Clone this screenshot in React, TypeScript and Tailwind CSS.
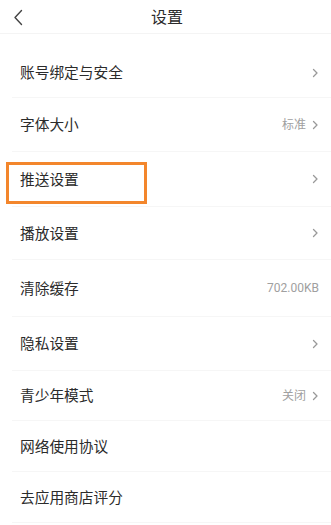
const rows = [
  { label: "账号绑定与安全", h: "h-[50px]", arrow: true },
  { label: "字体大小", h: "h-[54px]", value: "标准", arrow: true },
  { label: "推送设置", h: "h-[55px]", arrow: true, marked: true },
  { label: "播放设置", h: "h-[53px]", arrow: true },
  { label: "清除缓存", h: "h-[57px]", value: "702.00KB" },
  { label: "隐私设置", h: "h-[54px]", arrow: true },
  { label: "青少年模式", h: "h-[50px]", value: "关闭", arrow: true },
  { label: "网络使用协议", h: "h-[51px]" },
  { label: "去应用商店评分", h: "h-[51px]" },
];

function ChevronRight() {
  return (
    <svg width="8" height="10" viewBox="0 0 8 10" className="ml-[5px]">
      <path d="M2.5 1.5 L6 5 L2.5 8.5" fill="none" stroke="#999" strokeWidth="1.3" strokeLinecap="round" strokeLinejoin="round" />
    </svg>
  );
}

export default function App() {
  return (
    <main className="w-[331px] h-[525px] overflow-hidden bg-white font-['Noto_Sans_CJK_SC',sans-serif] text-[#2b2b2b]">
      {/* Header */}
      <header className="relative h-[34px] flex items-center justify-center border-b border-[#f4f4f4]">
        <button className="absolute left-[12px] top-[9px]">
          <svg width="12" height="17" viewBox="0 0 12 17">
            <path d="M9.5 1.5 L3 8.5 L9.5 15.5" fill="none" stroke="#444" strokeWidth="1.4" strokeLinecap="round" strokeLinejoin="round" />
          </svg>
        </button>
        <h1 className="text-[16px] leading-none -mt-[2px] ml-[3px]">设置</h1>
      </header>

      <div className="h-[14px]" />

      {/* List */}
      <ul className="pl-[12px]">
        {rows.map((row) => (
          <li
            key={row.label}
            className={`relative ${row.h} flex items-center justify-between pl-[8px] pr-[12px] border-b border-[#f6f6f6]`}
          >
            <span className="text-[14.7px] leading-none">{row.label}</span>
            <span className="flex items-center">
              {row.value && (
                <span className="text-[12px] text-[#a0a0a0] leading-none font-['Roboto','Noto_Sans_CJK_SC',sans-serif]">
                  {row.value}
                </span>
              )}
              {row.arrow && <ChevronRight />}
            </span>
            {row.marked && (
              <span className="absolute left-[-6px] top-[10px] w-[141px] h-[42px] border-[3px] border-[#f3862c]" />
            )}
          </li>
        ))}
      </ul>
    </main>
  );
}
